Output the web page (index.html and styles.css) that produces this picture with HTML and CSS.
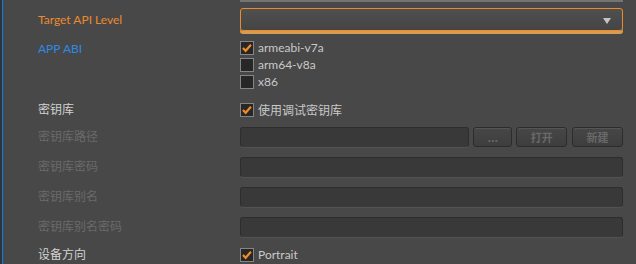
FILE: index.html
```html
<!DOCTYPE html>
<html lang="en">
<head>
    <meta charset="UTF-8">
    <title>Android Settings</title>
    <link rel="stylesheet" href="styles.css">
</head>
<body>
    <div class="strip"></div>

    <div class="panel">
        <!-- bottom edge of the control above, scrolled out of view -->
        <div class="top-edge"></div>

        <div class="row row-api">
            <div class="label label-orange">Target API Level</div>
            <div class="control">
                <div class="dropdown">
                    <span class="arrow"></span>
                </div>
            </div>
        </div>

        <div class="row row-abi">
            <div class="label label-blue">APP ABI</div>
            <div class="control">
                <div class="check-item">
                    <span class="box checked"><svg viewBox="0 0 14 14"><path d="M2.3 7 L5.4 10.2 L11.6 3.2"/></svg></span>
                    <span class="check-text">armeabi-v7a</span>
                </div>
                <div class="check-item">
                    <span class="box"></span>
                    <span class="check-text">arm64-v8a</span>
                </div>
                <div class="check-item">
                    <span class="box"></span>
                    <span class="check-text">x86</span>
                </div>
            </div>
        </div>

        <div class="row row-keystore">
            <div class="label">密钥库</div>
            <div class="control">
                <div class="check-item">
                    <span class="box checked"><svg viewBox="0 0 14 14"><path d="M2.3 7 L5.4 10.2 L11.6 3.2"/></svg></span>
                    <span class="check-text">使用调试密钥库</span>
                </div>
            </div>
        </div>

        <div class="row row-field">
            <div class="label label-dim">密钥库路径</div>
            <div class="control path-group">
                <div class="input input-path"></div>
                <button class="btn btn-dots" disabled>...</button>
                <button class="btn btn-open" disabled>打开</button>
                <button class="btn btn-new" disabled>新建</button>
            </div>
        </div>

        <div class="row row-field">
            <div class="label label-dim">密钥库密码</div>
            <div class="control"><div class="input"></div></div>
        </div>

        <div class="row row-field">
            <div class="label label-dim">密钥库别名</div>
            <div class="control"><div class="input"></div></div>
        </div>

        <div class="row row-field">
            <div class="label label-dim">密钥库别名密码</div>
            <div class="control"><div class="input"></div></div>
        </div>

        <div class="row row-orient">
            <div class="label">设备方向</div>
            <div class="control">
                <div class="check-item">
                    <span class="box checked"><svg viewBox="0 0 14 14"><path d="M2.3 7 L5.4 10.2 L11.6 3.2"/></svg></span>
                    <span class="check-text">Portrait</span>
                </div>
            </div>
        </div>
    </div>
</body>
</html>
```

FILE: styles.css
```css
html, body {
    height: 100%;
}

body {
    margin: 0;
    display: flex;
    background-color: #484848;
    font-family: Lato, "Noto Sans CJK SC", sans-serif;
    font-size: 12px;
    color: #d0d0d0;
    overflow: hidden;
}

.strip {
    width: 2px;
    border-right: 1px solid #1c7ad6; /* blue focus edge */
    background-color: #2b3540;
    flex-shrink: 0;
}

.panel {
    flex: 1;
    padding-left: 35px;
}

.top-edge {
    margin-left: 202px;
    width: 383px;
    height: 2px;
    background-color: #747474;
}

.row {
    display: flex;
}

.label {
    width: 202px;
    flex-shrink: 0;
    color: #d2d2d2;
    line-height: 16px;
}

.label-orange {
    color: #ec8a2f;
}

.label-blue {
    color: #2d8ae6;
    padding-top: 2px;
}

.label-dim {
    color: #6a6a6a;
}

.control {
    width: 383px;
}

/* Target API Level */
.row-api {
    margin-top: 6px;
    align-items: center;
}

.dropdown {
    position: relative;
    height: 21px;
    border: 1px solid #ec8a2c;
    border-radius: 3px;
    background: linear-gradient(#4f4f4f, #454545);
    box-shadow: 0 3px 0 #d59d50;
}

.arrow {
    position: absolute;
    right: 11px;
    top: 9px;
    width: 0;
    height: 0;
    border-left: 4px solid transparent;
    border-right: 4px solid transparent;
    border-top: 6px solid #c4c4c4;
}

/* check boxes */
.check-item {
    display: flex;
    align-items: center;
    height: 17px;
}

.box {
    width: 12px;
    height: 12px;
    border: 1px solid #858585;
    background-color: #272727;
    margin-right: 4px;
    flex-shrink: 0;
}

.box svg {
    display: block;
    width: 12px;
    height: 12px;
}

.box svg path {
    fill: none;
    stroke: #f28b26;
    stroke-width: 2.6;
}

.check-text {
    color: #c9c9c9;
}

.row-abi {
    margin-top: 8px;
}

.row-keystore {
    margin-top: 11px;
}

.row-keystore .label,
.row-orient .label {
    line-height: 17px;
}

/* text fields */
.row-field {
    margin-top: 9px;
    align-items: center;
}

.row-field + .row-field {
    margin-top: 10px;
}

.input {
    height: 18px;
    border: 1px solid #2d2d2d;
    border-bottom-color: #3a3a3a;
    border-radius: 3px;
    background-color: #393939;
    box-shadow: 0 1px 0 #525252;
}

.path-group {
    display: flex;
    gap: 4px;
}

.input-path {
    width: 228px;
}

.btn {
    height: 20px;
    padding: 0;
    border: 1px solid #2c2c2c;
    border-radius: 3px;
    background: linear-gradient(#474747, #3e3e3e);
    box-shadow: inset 0 1px 0 #555;
    color: #696969;
    font-family: "Noto Sans CJK SC", sans-serif;
    font-size: 11px;
    font-weight: bold;
    line-height: 16px;
}

.btn-dots {
    width: 39px;
}

.btn-open {
    width: 51px;
}

.btn-new {
    width: 51px;
    margin-left: 1px;
}

.row-orient {
    margin-top: 9px;
}
```
